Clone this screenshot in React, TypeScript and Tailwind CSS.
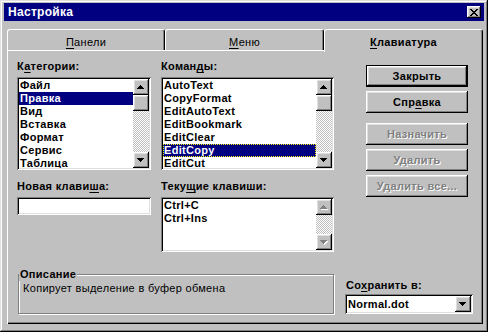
import React from 'react'

const raised = 'shadow-[inset_-1px_-1px_#000,inset_1px_1px_#fff,inset_-2px_-2px_#808080,inset_2px_2px_#dfdfdf]'
const sunken = 'shadow-[inset_1px_1px_#808080,inset_-1px_-1px_#fff,inset_2px_2px_#000,inset_-2px_-2px_#dfdfdf]'

// маленький треугольник для кнопок прокрутки
const Tri = ({ down, disabled }: { down?: boolean; disabled?: boolean }) => {
  const rows = [[3, 1], [2, 3], [1, 5], [0, 7]]
  const shape = (dx: number, dy: number, fill: string) =>
    rows.map(([x, w], i) => (
      <rect key={`${dx}-${i}`} x={x + dx} y={(down ? 3 - i : i) + dy} width={w} height={1} fill={fill} />
    ))
  return (
    <svg width="8" height="5" shapeRendering="crispEdges">
      {disabled && shape(1, 1, '#fff')}
      {shape(0, 0, disabled ? '#808080' : '#000')}
    </svg>
  )
}

const CloseX = () => {
  const rows = [
    [0, 1, 6, 7],
    [1, 2, 5, 6],
    [2, 3, 4, 5],
    [3, 4],
    [2, 3, 4, 5],
    [1, 2, 5, 6],
    [0, 1, 6, 7]
  ]
  return (
    <svg width="8" height="7" shapeRendering="crispEdges">
      {rows.map((r, y) => r.map(x => <rect key={`${x}-${y}`} x={x} y={y} width={1} height={1} fill="#000" />))}
    </svg>
  )
}

const ScrollBtn = ({ children }: { children: React.ReactNode }) => (
  <div className={`flex h-[16px] w-[16px] shrink-0 items-center justify-center bg-[#c0c0c0] ${raised}`}>
    {children}
  </div>
)

const ScrollBar = ({ thumb, disabled }: { thumb?: boolean; disabled?: boolean }) => (
  <div className="flex w-[16px] shrink-0 flex-col">
    <ScrollBtn><Tri disabled={disabled} /></ScrollBtn>
    {thumb && <div className={`h-[16px] w-[16px] shrink-0 bg-[#c0c0c0] ${raised}`} />}
    <div className="flex-1 bg-[image:repeating-conic-gradient(#c0c0c0_0_25%,#fff_0_50%)] bg-[length:2px_2px]" />
    <ScrollBtn><Tri down disabled={disabled} /></ScrollBtn>
  </div>
)

interface ListBoxProps {
  items: string[]
  height: string
  selected?: number
  focus?: boolean
  thumb?: boolean
  disabled?: boolean
}

const ListBox = ({ items, height, selected = -1, focus, thumb, disabled }: ListBoxProps) => (
  <div className={`flex ${height} bg-white p-[2px] ${sunken}`}>
    <div className="flex-1 overflow-hidden font-bold">
      {items.map((it, i) => (
        <div
          key={it}
          className={`h-[13px] whitespace-nowrap pl-[1px] leading-[13px] ${
            i === selected ? 'bg-[#000080] text-white' : ''
          } ${i === selected && focus ? 'outline-1 -outline-offset-1 outline-dotted outline-[#ffff00]' : ''}`}
        >
          {it}
        </div>
      ))}
    </div>
    <ScrollBar thumb={thumb} disabled={disabled} />
  </div>
)

const Label = ({ children, className = '' }: { children: React.ReactNode; className?: string }) => (
  <div className={`h-[13px] whitespace-nowrap font-bold leading-[13px] ${className}`}>{children}</div>
)

const U = ({ children }: { children: React.ReactNode }) => (
  <span className="underline underline-offset-[2px]">{children}</span>
)

const Btn = ({ children, def, disabled }: { children: React.ReactNode; def?: boolean; disabled?: boolean }) => (
  <div
    className={`flex h-[22px] w-[102px] items-center justify-center bg-[#c0c0c0] font-bold ${raised} ${
      def ? 'border border-black' : ''
    } ${disabled ? 'text-[#808080] [text-shadow:1px_1px_#fff]' : ''}`}
  >
    {children}
  </div>
)

const Tab = ({ children, width, active }: { children: React.ReactNode; width: string; active?: boolean }) => (
  <div
    className={`${width} rounded-t-[3px] border-l border-r border-t border-white border-r-black bg-[#c0c0c0] pt-[6px] text-center leading-[13px] shadow-[inset_-1px_0_#808080] ${
      active ? 'relative z-10 h-[23px] font-bold' : 'h-[21px]'
    }`}
  >
    {children}
  </div>
)

const categories = ['Файл', 'Правка', 'Вид', 'Вставка', 'Формат', 'Сервис', 'Таблица']
const commands = ['AutoText', 'CopyFormat', 'EditAutoText', 'EditBookmark', 'EditClear', 'EditCopy', 'EditCut']

export default function App() {
  return (
    <div className="h-[332px] w-[488px] bg-[#c0c0c0] px-[4px] pt-[3px] font-['Liberation_Sans',Arial,sans-serif] text-[11px] leading-[13px] tracking-[0.3px] text-black shadow-[inset_-1px_-1px_#000,inset_1px_1px_#dfdfdf,inset_-2px_-2px_#808080,inset_2px_2px_#fff]">
      {/* Заголовок */}
      <div className="flex h-[18px] items-center justify-between bg-[#000080] pl-[4px] pr-[3px]">
        <span className="text-[12px] font-bold text-white">Настройка</span>
        <div className={`flex h-[12px] w-[14px] items-center justify-center bg-[#c0c0c0] ${raised}`}>
          <CloseX />
        </div>
      </div>

      <div className="ml-[3px] mt-[8px] w-[476px]">
        {/* Вкладки */}
        <div className="flex h-[21px] items-start">
          <Tab width="w-[158px]"><U>П</U>анели</Tab>
          <Tab width="w-[159px]"><U>М</U>еню</Tab>
          <Tab width="w-[159px]" active><U>К</U>лавиатура</Tab>
        </div>

        {/* Панель */}
        <div className="h-[274px] bg-[#c0c0c0] pl-[10px] pt-[10px] shadow-[inset_1px_1px_#fff,inset_-1px_-1px_#000,inset_-2px_-2px_#808080]">
          <div className="flex">
            <div className="w-[134px]">
              <Label>К<U>а</U>тегории:</Label>
              <div className="mt-[4px]">
                <ListBox items={categories} height="h-[93px]" selected={1} thumb />
              </div>
              <Label className="mt-[10px]">Новая клави<U>ш</U>а:</Label>
              <div className={`mt-[4px] h-[18px] bg-white ${sunken}`} />
            </div>

            <div className="ml-[10px] w-[173px]">
              <Label>Коман<U>д</U>ы:</Label>
              <div className="mt-[4px]">
                <ListBox items={commands} height="h-[93px]" selected={5} focus thumb />
              </div>
              <Label className="mt-[10px]">Теку<U>щ</U>ие клавиши:</Label>
              <div className="mt-[4px]">
                <ListBox items={['Ctrl+C', 'Ctrl+Ins']} height="h-[55px]" disabled />
              </div>
            </div>

            <div className="ml-[32px] mt-[5px] flex w-[102px] flex-col">
              <Btn def>Закрыть</Btn>
              <div className="mt-[4px]"><Btn>Спр<U>а</U>вка</Btn></div>
              <div className="mt-[10px]"><Btn disabled>Назначить</Btn></div>
              <div className="mt-[4px]"><Btn disabled>Удалить</Btn></div>
              <div className="mt-[4px]"><Btn disabled>Удалить все...</Btn></div>
            </div>
          </div>

          <div className="mt-[22px] flex items-end">
            {/* Описание */}
            <div className="relative ml-[1px] h-[40px] w-[316px] border border-[#808080] pl-[4px] pt-[7px] shadow-[inset_1px_1px_#fff,1px_1px_#fff]">
              <span className="absolute -top-[7px] left-0 bg-[#c0c0c0] px-[1px] font-bold">Описание</span>
              <div className="whitespace-nowrap">Копирует выделение в буфер обмена</div>
            </div>

            <div className="ml-[11px]">
              <Label className="pl-[1px]">Со<U>х</U>ранить в:</Label>
              <div className={`mt-[2px] flex h-[20px] w-[128px] items-center bg-white p-[2px] ${sunken}`}>
                <span className="pl-[1px] font-bold">Normal.dot</span>
                <div className="ml-auto">
                  <ScrollBtn><Tri down /></ScrollBtn>
                </div>
              </div>
            </div>
          </div>
        </div>
      </div>
    </div>
  )
}
